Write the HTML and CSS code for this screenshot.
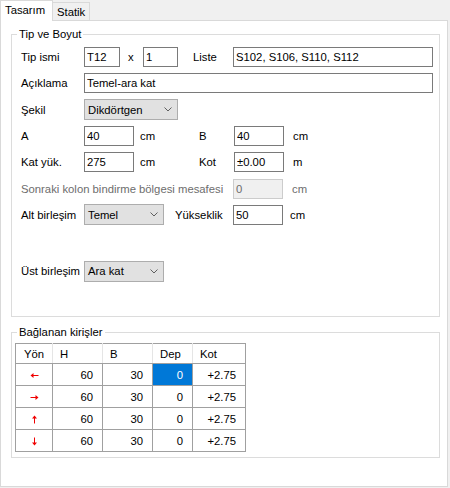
FILE: index.html
```html
<!DOCTYPE html>
<html lang="tr">
<head>
<meta charset="utf-8">
<link rel="stylesheet" href="styles.css">
</head>
<body>
<div class="tabs">
  <div class="tab active">Tasarım</div>
  <div class="tab">Statik</div>
</div>
<div class="panel">
  <fieldset class="group g1">
    <legend>Tip ve Boyut</legend>
    <div class="rows">
      <div class="row">
        <span class="lbl">Tip ismi</span>
        <input class="tb w36" value="T12">
        <span class="sep-x">x</span>
        <input class="tb w35" value="1">
        <span class="sep-liste">Liste</span>
        <input class="tb w200" value="S102, S106, S110, S112">
      </div>
      <div class="row">
        <span class="lbl">Açıklama</span>
        <input class="tb w349" value="Temel-ara kat">
      </div>
      <div class="row">
        <span class="lbl">Şekil</span>
        <div class="combo w94"><span>Dikdörtgen</span><svg class="chev" width="8" height="5" viewBox="0 0 8 5"><path d="M0.5 0.5 L4 4 L7.5 0.5" fill="none" stroke="#5f5f5f" stroke-width="1"/></svg></div>
      </div>
      <div class="row">
        <span class="lbl">A</span>
        <input class="tb w50" value="40">
        <span class="unit1">cm</span>
        <span class="lbl2">B</span>
        <input class="tb w50" value="40">
        <span class="unit2">cm</span>
      </div>
      <div class="row">
        <span class="lbl">Kat yük.</span>
        <input class="tb w50" value="275">
        <span class="unit1">cm</span>
        <span class="lbl2">Kot</span>
        <input class="tb w50" value="±0.00">
        <span class="unit2">m</span>
      </div>
      <div class="row">
        <span class="lbl-long dis">Sonraki kolon bindirme bölgesi mesafesi</span>
        <input class="tb w50 disabled" value="0" disabled>
        <span class="unit2 dis">cm</span>
      </div>
      <div class="row">
        <span class="lbl">Alt birleşim</span>
        <div class="combo w80"><span>Temel</span><svg class="chev" width="8" height="5" viewBox="0 0 8 5"><path d="M0.5 0.5 L4 4 L7.5 0.5" fill="none" stroke="#5f5f5f" stroke-width="1"/></svg></div>
        <span class="lbl3">Yükseklik</span>
        <input class="tb w50" value="50">
        <span class="unit3">cm</span>
      </div>
      <div class="row last">
        <span class="lbl">Üst birleşim</span>
        <div class="combo w80"><span>Ara kat</span><svg class="chev" width="8" height="5" viewBox="0 0 8 5"><path d="M0.5 0.5 L4 4 L7.5 0.5" fill="none" stroke="#5f5f5f" stroke-width="1"/></svg></div>
      </div>
    </div>
  </fieldset>

  <fieldset class="group g2">
    <legend>Bağlanan kirişler</legend>
    <table class="grid">
      <colgroup>
        <col class="c1"><col class="c2"><col class="c3"><col class="c4"><col class="c5">
      </colgroup>
      <thead>
        <tr><th class="center">Yön</th><th>H</th><th>B</th><th>Dep</th><th>Kot</th></tr>
      </thead>
      <tbody>
        <tr>
          <td class="center"><svg width="9" height="7" viewBox="0 0 9 7"><path d="M1 3.5 H8.5" stroke="#f00000" stroke-width="1"/><path d="M0.5 3.5 L3.5 1 V6 Z" fill="#f00000"/></svg></td>
          <td>60</td><td>30</td><td class="sel">0</td><td>+2.75</td>
        </tr>
        <tr>
          <td class="center"><svg width="9" height="7" viewBox="0 0 9 7"><path d="M0.5 3.5 H8" stroke="#f00000" stroke-width="1"/><path d="M8.5 3.5 L5.5 1 V6 Z" fill="#f00000"/></svg></td>
          <td>60</td><td>30</td><td>0</td><td>+2.75</td>
        </tr>
        <tr>
          <td class="center"><svg width="7" height="9" viewBox="0 0 7 9"><path d="M3.5 1 V8.5" stroke="#f00000" stroke-width="1"/><path d="M3.5 0.5 L1 3.5 H6 Z" fill="#f00000"/></svg></td>
          <td>60</td><td>30</td><td>0</td><td>+2.75</td>
        </tr>
        <tr>
          <td class="center"><svg width="7" height="9" viewBox="0 0 7 9"><path d="M3.5 0.5 V8" stroke="#f00000" stroke-width="1"/><path d="M3.5 8.5 L1 5.5 H6 Z" fill="#f00000"/></svg></td>
          <td>60</td><td>30</td><td>0</td><td>+2.75</td>
        </tr>
      </tbody>
    </table>
  </fieldset>
</div>
</body>
</html>
```

FILE: styles.css
```css
* { box-sizing: border-box; }
html, body { margin: 0; padding: 0; }
body {
  width: 450px;
  height: 488px;
  background: #f0f0f0;
  font-family: "Liberation Sans", Arial, sans-serif;
  font-size: 11.3px;
  color: #000;
  overflow: hidden;
}

.tabs {
  display: flex;
  align-items: flex-end;
  height: 20px;
}
.tab {
  height: 18px;
  width: 37px;
  border: 1px solid #d9d9d9;
  border-left: none;
  border-bottom: none;
  background: #f0f0f0;
  padding: 3px 0 0 4px;
  line-height: 12px;
}
.tab.active {
  position: relative;
  z-index: 1;
  width: 53px;
  height: 21px;
  margin-bottom: -1px;
  border-left: 1px solid #d9d9d9;
  background: #fff;
  padding: 3px 0 0 4px;
}

.panel {
  width: 448px;
  height: 467px;
  background: #fff;
  border: 1px solid #d9d9d9;
  padding-top: 6px;
}

.group {
  margin: 0 0 0 10px;
  width: 429px;
  border: 1px solid #dcdcdc;
  min-width: 0;
}
.group legend {
  line-height: 14px;
  padding: 0 2px;
}
.g1 {
  height: 290px;
  padding: 6px 0 0 9px;
}
.g1 legend { margin-left: -4px; }
.g2 {
  margin-top: 8px;
  height: 133px;
  padding: 4px 0 0 3px;
}
.g2 legend { margin-left: 2px; }

.rows {
  display: flex;
  flex-direction: column;
  gap: 6.33px;
}
.row {
  display: flex;
  align-items: center;
  height: 20px;
}
.row.last { margin-top: 30px; }

.lbl { width: 63px; flex: none; }
.lbl-long { width: 212px; flex: none; }
.dis { color: #6d6d6d; }
.sep-x { width: 23px; padding-left: 8px; flex: none; }
.sep-liste { width: 55px; padding-left: 15px; flex: none; }
.unit1 { width: 65px; padding-left: 6px; flex: none; }
.lbl2 { width: 35px; flex: none; }
.unit2 { padding-left: 9px; }
.lbl3 { width: 69px; padding-left: 11px; flex: none; }
.unit3 { padding-left: 7px; }

.tb {
  flex: none;
  height: 20px;
  border: 1px solid #7a7a7a;
  background: #fff;
  font: inherit;
  color: #000;
  padding: 0 2px;
  margin: 0;
  outline: none;
}
.tb.disabled {
  background: #f0f0f0;
  border-color: #cccccc;
  color: #6d6d6d;
}
.w35 { width: 35px; }
.w36 { width: 36px; }
.w50 { width: 50px; }
.w80 { width: 80px; }
.w94 { width: 94px; }
.w200 { width: 200px; }
.w349 { width: 349px; }

.combo {
  flex: none;
  height: 21px;
  display: flex;
  align-items: center;
  justify-content: space-between;
  background: #e1e1e1;
  border: 1px solid #adadad;
  padding: 0 5px 0 3px;
}
.chev { display: block; }

.grid {
  border-collapse: collapse;
  table-layout: fixed;
  width: 230px;
  border: 1px solid #a0a0a0;
}
.c1 { width: 37px; }
.c2 { width: 50px; }
.c3 { width: 50px; }
.c4 { width: 40px; }
.c5 { width: 53px; }
.grid th {
  height: 20px;
  font-weight: normal;
  text-align: left;
  padding: 0 0 0 7px;
  border-right: 1px solid #e5e5e5;
  border-bottom: 1px solid #a0a0a0;
  background: #fff;
}
.grid th:last-child { border-right: 1px solid #a0a0a0; }
.grid td {
  height: 22px;
  text-align: right;
  padding: 0 9px 0 0;
  border: 1px solid #a0a0a0;
}
.grid th.center, .grid td.center {
  text-align: center;
  padding: 0;
}
.grid td.center svg { display: inline-block; vertical-align: middle; }
.grid td.sel {
  background: #0078d7;
  color: #fff;
}
```
